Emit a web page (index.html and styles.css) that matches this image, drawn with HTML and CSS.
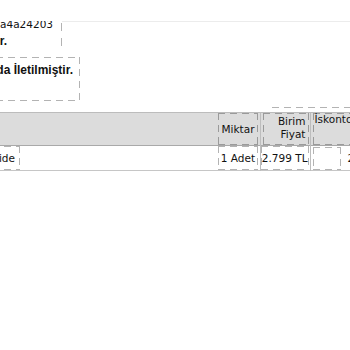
FILE: index.html
```html
<!DOCTYPE html>
<html lang="tr">
<head>
<meta charset="UTF-8">
<meta name="viewport" content="width=device-width, initial-scale=1.0">
<title>e-Arşiv Fatura</title>
<link rel="stylesheet" href="styles.css">
</head>
<body>

<div class="invoice">

  <!-- ETTN block -->
  <div class="top">
    <div class="ettn dash-r">
      <div class="ln ettn-no"><span>ETTN: 6f2c0b9e-31d7-4e58-9a0c-c1b7a4a24203</span></div>
      <div class="ln ettn-type"><span>Bu fatura e-Arşiv faturadır.</span></div>
    </div>
    <div class="top-rest"></div>
  </div>

  <!-- delivery note -->
  <div class="note dash">
    <span>e-Arşiv İzni Kapsamında Elektronik Ortamda İletilmiştir.</span>
  </div>

  <div class="rule dash-x"></div>

  <!-- invoice lines -->
  <table class="lines">
    <colgroup>
      <col class="c-name">
      <col class="c-qty">
      <col class="c-price">
      <col class="c-disc">
      <col class="c-more">
    </colgroup>
    <thead>
      <tr>
        <th class="t-name">Mal Hizmet</th>
        <th><div class="cell qty dash dark">Miktar</div></th>
        <th class="price"><div class="cell hprice dash dark">Birim<br>Fiyat</div></th>
        <th><div class="cell hdisc dash dark">İskonto Oranı</div></th>
        <th><div class="cell">İskonto Tutarı</div></th>
      </tr>
    </thead>
    <tbody>
      <tr>
        <td><div class="name dash"><span>Bluetooth Kulaklık 2 Yıl Garantide</span></div></td>
        <td><div class="cell qty-val dash">1 Adet</div></td>
        <td class="price"><div class="cell num dash">2.799 TL</div></td>
        <td><div class="cell disc"><span class="blank dash"></span>20,00</div></td>
        <td><div class="cell">0,00 TL</div></td>
      </tr>
    </tbody>
  </table>

</div>

</body>
</html>
```

FILE: styles.css
```css
body {
  margin: 0;
  overflow: hidden;
  background: #fff;
  color: #111;
  font-family: "DejaVu Sans", sans-serif;
  font-size: 10.5px;
}

/* page is wider than the window, scrolled to the right */
.invoice {
  margin-left: -140px;
  width: 640px;
  padding-top: 21px;
}

/* dashed outlines drawn with gradients for longer dashes */
.dash, .dash-r, .dash-x {
  --dc: #b3b3b3;
}
.dash.dark {
  --dc: #9a9a9a;
}
.dash {
  background:
    linear-gradient(90deg, var(--dc) 7px, transparent 0) 0 0 / 12px 1px repeat-x,
    linear-gradient(90deg, var(--dc) 7px, transparent 0) 0 100% / 12px 1px repeat-x,
    linear-gradient(var(--dc) 7px, transparent 0) 0 0 / 1px 12px repeat-y,
    linear-gradient(var(--dc) 7px, transparent 0) 100% 0 / 1px 12px repeat-y;
}
.dash-r {
  background: linear-gradient(var(--dc) 8px, transparent 0) 100% 2px / 1px 15px repeat-y;
}
.dash-x {
  background: linear-gradient(90deg, var(--dc) 7px, transparent 0) 2px 0 / 12px 1px repeat-x;
}

/* ETTN */
.top {
  display: flex;
}
.ettn {
  width: 202px;
  height: 28px;
  overflow: hidden;
}
.ln {
  display: flex;
  justify-content: flex-end;
  white-space: nowrap;
  line-height: 16px;
}
.ettn-no {
  margin-top: -5px;
  padding-right: 9px;
}
.ettn-type {
  margin-top: 1px;
  padding-right: 55px;
  font-family: "Liberation Sans", sans-serif;
  font-size: 12px;
  font-weight: bold;
}
.top-rest {
  flex: 1;
  border-top: 1px solid #ececec;
}

.note {
  display: flex;
  justify-content: flex-end;
  margin: 8px 0 0 40px;
  width: 180px;
  height: 44px;
  box-sizing: border-box;
  padding: 5px 7px 0 0;
  overflow: hidden;
  white-space: nowrap;
  line-height: 16px;
  font-family: "Liberation Sans", sans-serif;
  font-size: 12px;
  font-weight: bold;
}

.rule {
  margin: 6px 0 0 410px;
  width: 90px;
  height: 1px;
}

/* line items */
.lines {
  margin-top: 4px;
  width: 620px;
  table-layout: fixed;
  border-collapse: collapse;
}
.c-name { width: 357px; }
.c-qty { width: 43px; }
.c-price { width: 50px; }
.c-disc { width: 90px; }
.c-more { width: 80px; }

.lines th, .lines td {
  padding: 0;
  vertical-align: top;
  font-weight: normal;
  white-space: nowrap;
}
.lines thead tr {
  background: #dcdcdc;
  border-top: 1px solid #bcbcbc;
  border-bottom: 1px solid #a9a9a9;
}
.lines tbody tr {
  border-bottom: 1px solid #c6c6c6;
}
.lines .price {
  border-left: 1px solid #bdbdbd;
  border-right: 1px solid #bdbdbd;
}

.t-name {
  text-align: left;
  padding-left: 4px;
  line-height: 32px;
}
.cell {
  box-sizing: border-box;
  height: 32px;
  line-height: 13px;
}
td .cell {
  height: 24px;
}
.qty {
  display: flex;
  align-items: center;
  justify-content: center;
  margin-left: 1px;
  width: 40px;
}
.hprice {
  margin: 0 1px 0 2px;
  padding: 2px 3px 0 0;
  text-align: right;
}
.hdisc {
  margin-left: 2px;
  padding-left: 2px;
  text-align: left;
}

.name {
  display: flex;
  align-items: center;
  justify-content: flex-end;
  width: 160px;
  height: 24px;
  box-sizing: border-box;
  padding-right: 5px;
  overflow: hidden;
}
.qty-val {
  display: flex;
  align-items: center;
  justify-content: flex-end;
  margin-left: 1px;
  width: 40px;
  padding-right: 3px;
}
.num {
  display: flex;
  align-items: center;
  justify-content: flex-end;
  margin: 0 1px 0 0;
  padding-right: 1px;
}
.disc {
  display: flex;
  align-items: center;
}
.blank {
  align-self: flex-end;
  margin: 0 7px 0 2px;
  width: 28px;
  height: 23px;
}
```
